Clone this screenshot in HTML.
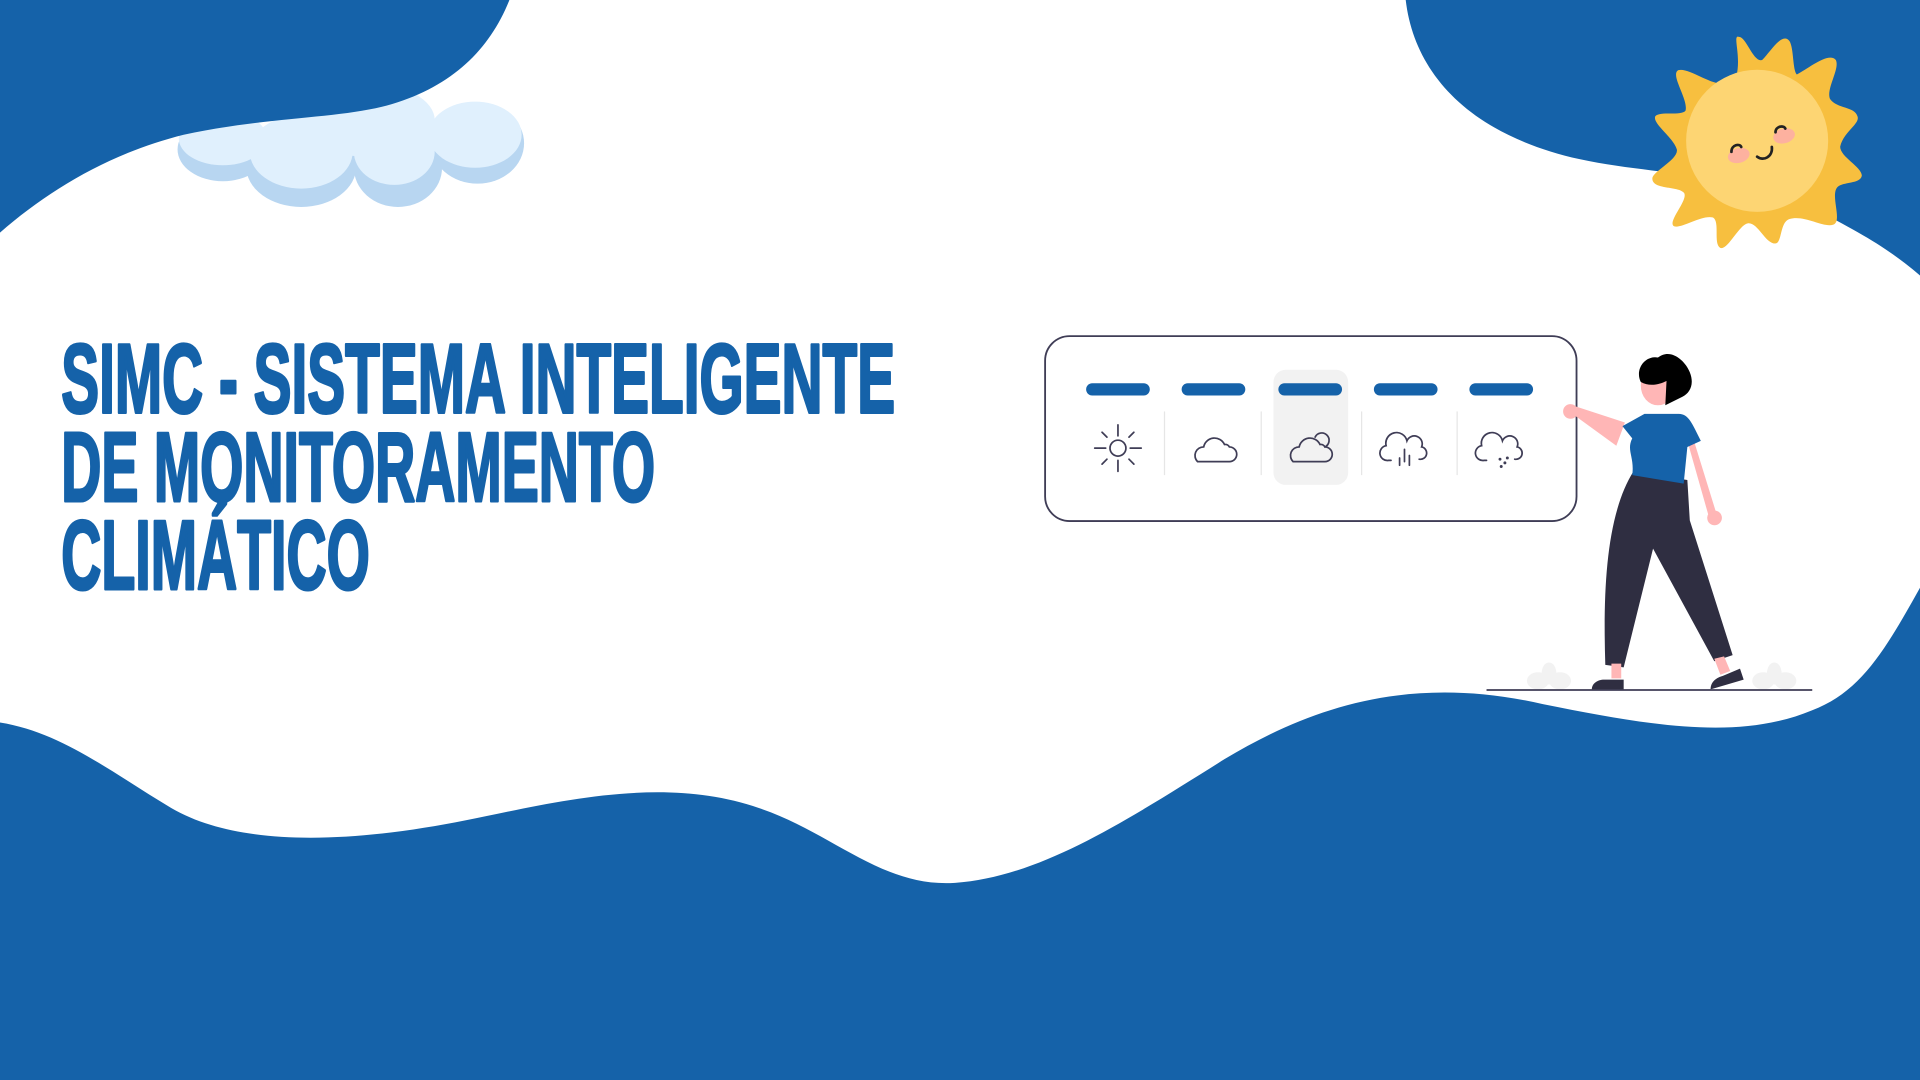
<!DOCTYPE html>
<html><head><meta charset="utf-8"><style>
html,body{margin:0;padding:0;background:#fff;}
svg{display:block}
</style></head><body>
<svg width="1920" height="1080" viewBox="0 0 1568 882" xmlns="http://www.w3.org/2000/svg">
<rect width="1568" height="882" fill="#fff"/>
<!-- cloud -->
<g>
<g fill="#b8d6f1">
<ellipse cx="182" cy="122" rx="37" ry="26"/>
<ellipse cx="246" cy="136" rx="45" ry="33"/>
<ellipse cx="325" cy="137" rx="36" ry="32"/>
<ellipse cx="390" cy="117" rx="38" ry="33"/>
<ellipse cx="300" cy="105" rx="55" ry="32"/>
</g>
<g fill="#e0f0fd">
<ellipse cx="182" cy="113" rx="36" ry="22"/>
<ellipse cx="246" cy="124" rx="42" ry="30"/>
<ellipse cx="322" cy="124" rx="33" ry="27"/>
<ellipse cx="388" cy="110" rx="38" ry="27"/>
<ellipse cx="300" cy="98" rx="55" ry="30"/>
</g>
</g>
<!-- top-left blob -->
<path fill="#1562a9" d="M0 0 L416 0 C400 40 370 70 320 85 C280 97 220 95 150 110 C90 125 40 155 0 190 Z"/>
<!-- top-right blob -->
<path fill="#1562a9" d="M1148 0 C1155 60 1200 110 1290 130 C1360 145 1430 140 1480 170 C1520 190 1545 205 1568 225 L1568 0 Z"/>
<!-- bottom wave -->
<path fill="#1562a9" d="M0 590 C50 598 90 630 140 660 C200 695 300 686 380 670 C450 656 540 632 620 660 C680 680 720 725 780 721 C850 716 920 670 1000 620 C1070 578 1150 550 1260 575 C1350 593 1420 605 1480 580 C1520 565 1540 530 1568 480 L1568 882 L0 882 Z"/>
<!-- sun -->
<g transform="translate(1435,115)">
<path transform="translate(-3,19) scale(1.18)" fill="#f7bf3f" d="M-12 -60 C-8 -75 -15 -90 -10 -88 C-5 -88 0 -70 6 -72 C12 -78 20 -92 25 -85 C28 -80 27 -65 30 -62 C38 -66 52 -78 57 -72 C60 -66 50 -52 53 -45 C58 -38 70 -40 72 -33 C74 -28 62 -22 60 -12 C60 -5 75 2 75 8 C74 14 62 12 58 16 C53 22 62 40 55 42 C48 44 35 35 25 38 C18 40 20 55 15 55 C8 55 3 40 -4 41 C-10 42 -18 60 -23 58 C-28 55 -23 40 -28 37 C-36 35 -50 45 -55 43 C-60 40 -45 25 -48 20 C-52 15 -70 18 -70 10 C-70 5 -52 -3 -53 -10 C-55 -18 -70 -28 -68 -33 C-65 -37 -50 -33 -47 -37 C-45 -45 -58 -62 -52 -65 C-45 -67 -30 -55 -22 -56 Z"/>
<circle r="58" fill="#fdd573"/>
<ellipse cx="-15" cy="12" rx="9" ry="6" fill="#fdb19f" transform="rotate(-15 -15 12)"/>
<ellipse cx="22" cy="-4" rx="9" ry="6" fill="#fdb19f" transform="rotate(-15 22 -4)"/>
<g fill="none" stroke="#222" stroke-width="2.2" stroke-linecap="round">
<path d="M-21 9 C-21 3 -14 2 -13 5"/>
<path d="M15 -7 C15 -12 22 -13 23 -10"/>
<path d="M0 13 C5 17 13 13 12 5"/>
</g>
</g>
<!-- title -->
<g font-family="Liberation Sans, sans-serif" font-weight="bold" font-size="80" fill="#1562a9" stroke="#1562a9" stroke-width="2.5" stroke-linejoin="round">
<text x="50" y="337" textLength="681" lengthAdjust="spacingAndGlyphs">SIMC - SISTEMA INTELIGENTE</text>
<text x="50" y="409" textLength="485" lengthAdjust="spacingAndGlyphs">DE MONITORAMENTO</text>
<text x="50" y="481" textLength="252" lengthAdjust="spacingAndGlyphs">CLIMÁTICO</text>
</g>
<!-- panel -->
<rect x="1040" y="302" width="61" height="94" rx="10" fill="#f2f2f2"/>
<rect x="853.5" y="274.5" width="434" height="151" rx="20" fill="none" stroke="#3f3d56" stroke-width="1.5"/>
<g fill="#1562a9">
<rect x="887" y="313" width="52" height="10" rx="5"/>
<rect x="965" y="313" width="52" height="10" rx="5"/>
<rect x="1044" y="313" width="52" height="10" rx="5"/>
<rect x="1122" y="313" width="52" height="10" rx="5"/>
<rect x="1200" y="313" width="52" height="10" rx="5"/>
</g>
<g stroke="#e6e6e6" stroke-width="1">
<line x1="951" y1="336" x2="951" y2="388"/>
<line x1="1030" y1="336" x2="1030" y2="388"/>
<line x1="1112" y1="336" x2="1112" y2="388"/>
<line x1="1190" y1="336" x2="1190" y2="388"/>
</g>
<g fill="none" stroke="#3f3d56" stroke-width="1.4" stroke-linecap="round">
<circle cx="913" cy="366" r="6.5"/>
<path d="M913 347v9M913 376v9M894 366h9M923 366h9M900 353l4 4M922 375l4 4M900 379l4-4M922 357l4-4"/>
<path d="M978 377 h26 a6 6 0 0 0 0 -12 a4 4 0 0 0 -4 -2 a9 9 0 0 0 -17 2 a7 7 0 0 0 -5 12 z"/>
<path d="M1056 377 h26 a6 6 0 0 0 0 -12 a4 4 0 0 0 -4 -2 a9 9 0 0 0 -17 2 a7 7 0 0 0 -5 12 z"/>
<path d="M1074 357 a6 6 0 1 1 8 8"/>
<path d="M1136 376 h-2 a6 6 0 0 1 -2 -12 a8 8 0 0 1 17 -4 a6 6 0 0 1 12 5 a5 5 0 0 1 -2 10 M1147 377v-10M1151 380v-8M1143 380v-6"/>
<path d="M1214 376 h-2 a6 6 0 0 1 -2 -12 a8 8 0 0 1 17 -4 a6 6 0 0 1 12 5 a5 5 0 0 1 -2 10"/>
</g>
<g fill="#3f3d56"><circle cx="1225" cy="375" r="1.2"/><circle cx="1229" cy="378" r="1.2"/><circle cx="1226" cy="381" r="1.2"/><circle cx="1231" cy="374" r="1.2"/></g>
<!-- ground plants -->
<g fill="#f2f2f2">
<ellipse cx="1256" cy="556" rx="9" ry="7"/><ellipse cx="1274" cy="556" rx="9" ry="7"/><ellipse cx="1265" cy="550" rx="6" ry="9"/>
<ellipse cx="1440" cy="556" rx="9" ry="7"/><ellipse cx="1458" cy="556" rx="9" ry="7"/><ellipse cx="1449" cy="550" rx="6" ry="9"/>
</g>
<line x1="1214" y1="563.5" x2="1480" y2="563.5" stroke="#3f3d56" stroke-width="1.5"/>
<!-- person -->
<g>
<path fill="#2f2e41" d="M1334 385 L1378 392 L1380 425 L1415 535 L1400 540 L1350 448 L1326 545 L1311 543 C1309 480 1312 420 1334 385 Z"/>
<path fill="#ffb6b6" d="M1316 542 h8 v12 h-8 z M1400 538 l8 -2 l5 12 l-8 3 z"/>
<path fill="#2f2e41" d="M1300 563 c0 -5 5 -8 10 -8 h16 v8 z M1397 563 c0 -5 3 -9 10 -11 l14 -6 l3 9 z"/>
<path fill="#ffb6b6" d="M1378 360 l6 2 l17 55 a6 6 0 1 1 -6 3 z"/>
<path fill="#ffb6b6" d="M1327 345 l-40 -13 a6 6 0 1 0 0 8 l33 24 z"/>
<path fill="#1562a9" d="M1325 348 l18 -10 h28 c8 0 11 8 18 22 l-11 5 l-3 30 l-42 -7 c2 -15 -5 -20 0 -30 z"/>
<ellipse cx="1354" cy="315" rx="14" ry="16" fill="#ffb6b6"/>
<path fill="#000" d="M1340 312 c-5 -10 3 -22 14 -20 c10 -8 22 2 26 12 c4 10 0 17 -6 20 l-14 7 l1 -20 c-5 3 -14 5 -21 1 z"/>
</g>
</svg>
</body></html>
